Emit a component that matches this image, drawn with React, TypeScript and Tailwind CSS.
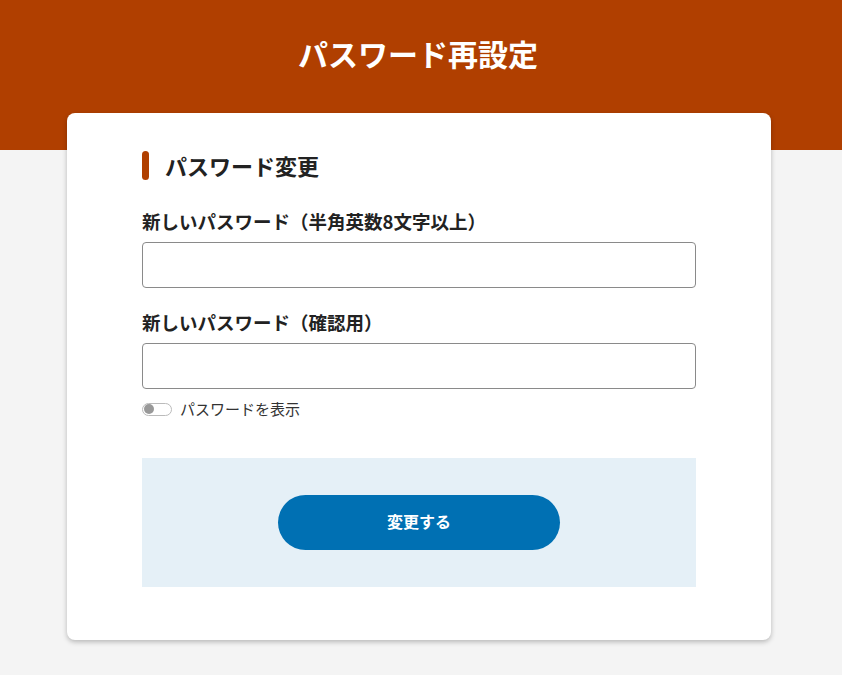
import { useState } from "react";

const font = { fontFamily: '"Noto Sans CJK JP", "Noto Sans", sans-serif' };

function Field({ label }: { label: string }) {
  return (
    <div>
      <label className="block text-[18.5px] font-bold leading-[27px] text-[#222]">{label}</label>
      <input
        type="password"
        className="mt-[7px] block h-[46px] w-full rounded-[4px] border border-[#8a8a8a] bg-white px-3 text-base focus:outline-none"
      />
    </div>
  );
}

export default function App() {
  const [show, setShow] = useState(false);

  return (
    <div className="min-h-[675px] bg-[#f4f4f4]" style={font}>
      {/* Header */}
      <div className="h-[150px] bg-[#b03f00] pt-[34px]">
        <h1 className="pr-[6px] text-center text-[30px] font-bold leading-[38px] text-white">パスワード再設定</h1>
      </div>

      {/* Card */}
      <div className="relative -mt-[37px] ml-[67px] w-[704px] rounded-[8px] bg-white px-[75px] pt-[38px] pb-[53px] shadow-[0_2px_5px_rgba(0,0,0,0.25)]">
        <div className="flex items-center gap-[16px]">
          <span className="h-[29px] w-[7px] rounded-full bg-[#b03f00]" />
          <h2 className="text-[22px] font-bold leading-[29px] text-[#222]">パスワード変更</h2>
        </div>

        <div className="mt-[28px]">
          <Field label="新しいパスワード（半角英数8文字以上）" />
        </div>
        <div className="mt-[21px]">
          <Field label="新しいパスワード（確認用）" />
        </div>

        <button
          type="button"
          onClick={() => setShow(!show)}
          className="mt-[9px] flex items-center gap-[8px]"
        >
          <span className="flex h-[13px] w-[30px] items-center rounded-full border border-[#bbb] bg-white px-[1px]">
            <span className="h-[10px] w-[10px] rounded-full bg-[#999]" />
          </span>
          <span className="text-[15px] leading-[22px] text-[#333]">パスワードを表示</span>
        </button>

        <div className="mt-[38px] flex justify-center bg-[#e5f0f7] py-[37px]">
          <button
            type="button"
            className="h-[55px] w-[282px] rounded-full bg-[#0070b3] pb-[3px] text-[16px] font-bold text-white"
          >
            変更する
          </button>
        </div>
      </div>
    </div>
  );
}
